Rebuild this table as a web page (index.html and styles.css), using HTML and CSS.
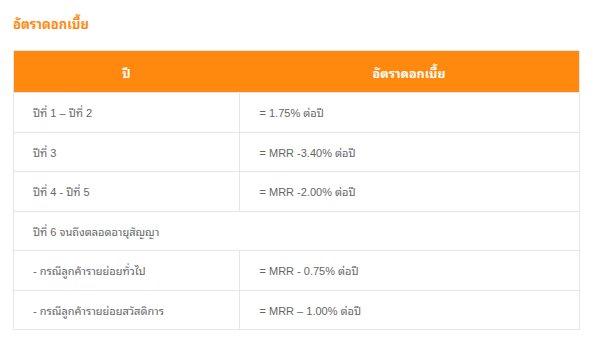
FILE: index.html
```html
<!DOCTYPE html>
<html lang="th">
<head>
<meta charset="utf-8">
<link rel="stylesheet" href="styles.css">
</head>
<body>
<div class="wrap">
  <h3 class="title">อัตราดอกเบี้ย</h3>
  <table class="rates">
    <thead>
      <tr><th class="c1">ปี</th><th class="c2">อัตราดอกเบี้ย</th></tr>
    </thead>
    <tbody>
      <tr><td>ปีที่ 1 – ปีที่ 2</td><td>= 1.75% ต่อปี</td></tr>
      <tr><td>ปีที่ 3</td><td>= MRR -3.40% ต่อปี</td></tr>
      <tr><td>ปีที่ 4 - ปีที่ 5</td><td>= MRR -2.00% ต่อปี</td></tr>
      <tr><td colspan="2">ปีที่ 6 จนถึงตลอดอายุสัญญา</td></tr>
      <tr><td>- กรณีลูกค้ารายย่อยทั่วไป</td><td>= MRR - 0.75% ต่อปี</td></tr>
      <tr><td>- กรณีลูกค้ารายย่อยสวัสดิการ</td><td>= MRR – 1.00% ต่อปี</td></tr>
    </tbody>
  </table>
</div>
</body>
</html>
```
FILE: styles.css
```css
html, body {
  margin: 0;
  padding: 0;
  background: #ffffff;
}
body {
  font-family: "Liberation Sans", "Noto Sans Thai Looped", "Loma", sans-serif;
}
.wrap {
  padding: 14px 14px 0 13px;
}
.title {
  margin: 0 0 15px 0;
  font-size: 13px;
  line-height: 21px;
  font-weight: bold;
  color: #ff8a12;
}
.rates {
  width: 567px;
  border-collapse: collapse;
  border: 1px solid #e6e6e6;
  table-layout: fixed;
}
.rates th {
  background: #ff880e;
  color: #ffffff;
  font-size: 12.5px;
  font-weight: bold;
  height: 41px;
  padding: 0;
  text-align: center;
  border: 0;
  border-bottom: 1px solid #e6e6e6;
}
.rates th.c1 { width: 225px; }
.rates td {
  font-size: 11px;
  color: #666666;
  height: 38.5px;
  padding: 0 0 0 19px;
  border: 1px solid #e6e6e6;
  vertical-align: middle;
}
.rates td + td {
  padding-left: 20px;
}
```
